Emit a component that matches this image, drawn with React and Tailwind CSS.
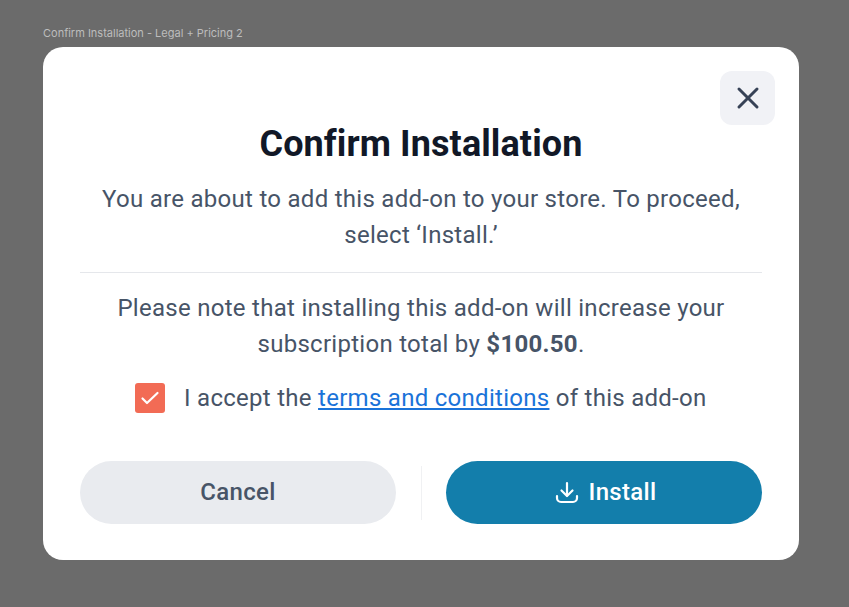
import React from 'react';

const App = () => {
  return (
    <div className="w-[849px] h-[607px] overflow-hidden bg-[#6b6b6b] pt-[27px] pl-[43px] font-['Roboto',sans-serif]">
      <div className="h-[20px] text-[11px] leading-[13px] font-['Inter',sans-serif] text-[#bdbdbd]">Confirm Installation - Legal + Pricing 2</div>

      <div className="relative w-[756px] h-[513px] bg-white rounded-[20px] px-[37px] pt-[76px]">
        <button type="button" className="absolute top-[24px] right-[24px] w-[55px] h-[54px] rounded-[12px] bg-[#f1f2f6] flex items-center justify-center">
          <svg width="24" height="24" viewBox="0 0 24 24" fill="none" stroke="#374256" strokeWidth="3" strokeLinecap="round">
            <path d="M3 3 L21 21" />
            <path d="M21 3 L3 21" />
          </svg>
        </button>

        <h1 className="text-center text-[36px] leading-[42px] tracking-[0.1px] font-bold text-[#111827]">Confirm Installation</h1>

        <p className="mt-[16px] text-center text-[24px] leading-[36px] tracking-[0.28px] text-[#475467]">
          You are about to add this add-on to your store. To proceed, select ‘Install.’
        </p>

        <div className="mt-[19px] h-[1px] bg-[#e5e7eb]"></div>

        <p className="mt-[17px] px-[20px] text-center text-[24px] leading-[36px] tracking-[0.28px] text-[#475467]">
          Please note that installing this add-on will increase your subscription total by <span className="font-bold">$100.50</span>.
        </p>

        <div className="mt-[18px] flex items-center pl-[55px]">
          <div className="w-[30px] h-[30px] rounded-[3px] bg-[#f26b55] flex items-center justify-center">
            <svg width="20" height="16" viewBox="0 0 20 16" fill="none" stroke="white" strokeWidth="2.2" strokeLinecap="round" strokeLinejoin="round">
              <path d="M2.500 8.500 L7 13 L17.500 3" />
            </svg>
          </div>
          <span className="ml-[19px] text-[24px] leading-[36px] tracking-[0.28px] text-[#475467]">
            I accept the <a href="#" className="text-[#1a73d9] underline">terms and conditions</a> of this add-on
          </span>
        </div>

        <div className="mt-[45px] flex items-center">
          <button type="button" className="w-[316px] h-[63px] pb-[2px] rounded-full bg-[#e9ebef] text-[24px] tracking-[0.3px] font-medium text-[#475467]">Cancel</button>
          <div className="ml-[25px] w-[1px] h-[54px] bg-[#f0f1f3]"></div>
          <button type="button" className="ml-[24px] w-[316px] h-[63px] pl-[3px] rounded-full bg-[#137eab] text-white text-[24px] tracking-[0.3px] font-medium flex items-center justify-center gap-[10px]">
            <svg width="24" height="23" viewBox="0 0 24 23" fill="none" stroke="white" strokeWidth="2.2" strokeLinecap="round" strokeLinejoin="round">
              <path d="M12 2 V14.500" />
              <path d="M6.500 9.500 L12 15 L17.500 9.500" />
              <path d="M2 15 V17 A4 4 0 0 0 6 21 H18 A4 4 0 0 0 22 17 V15" />
            </svg>
            <span className="pb-[2px]">Install</span>
          </button>
        </div>
      </div>
    </div>
  );
};

export default App;
